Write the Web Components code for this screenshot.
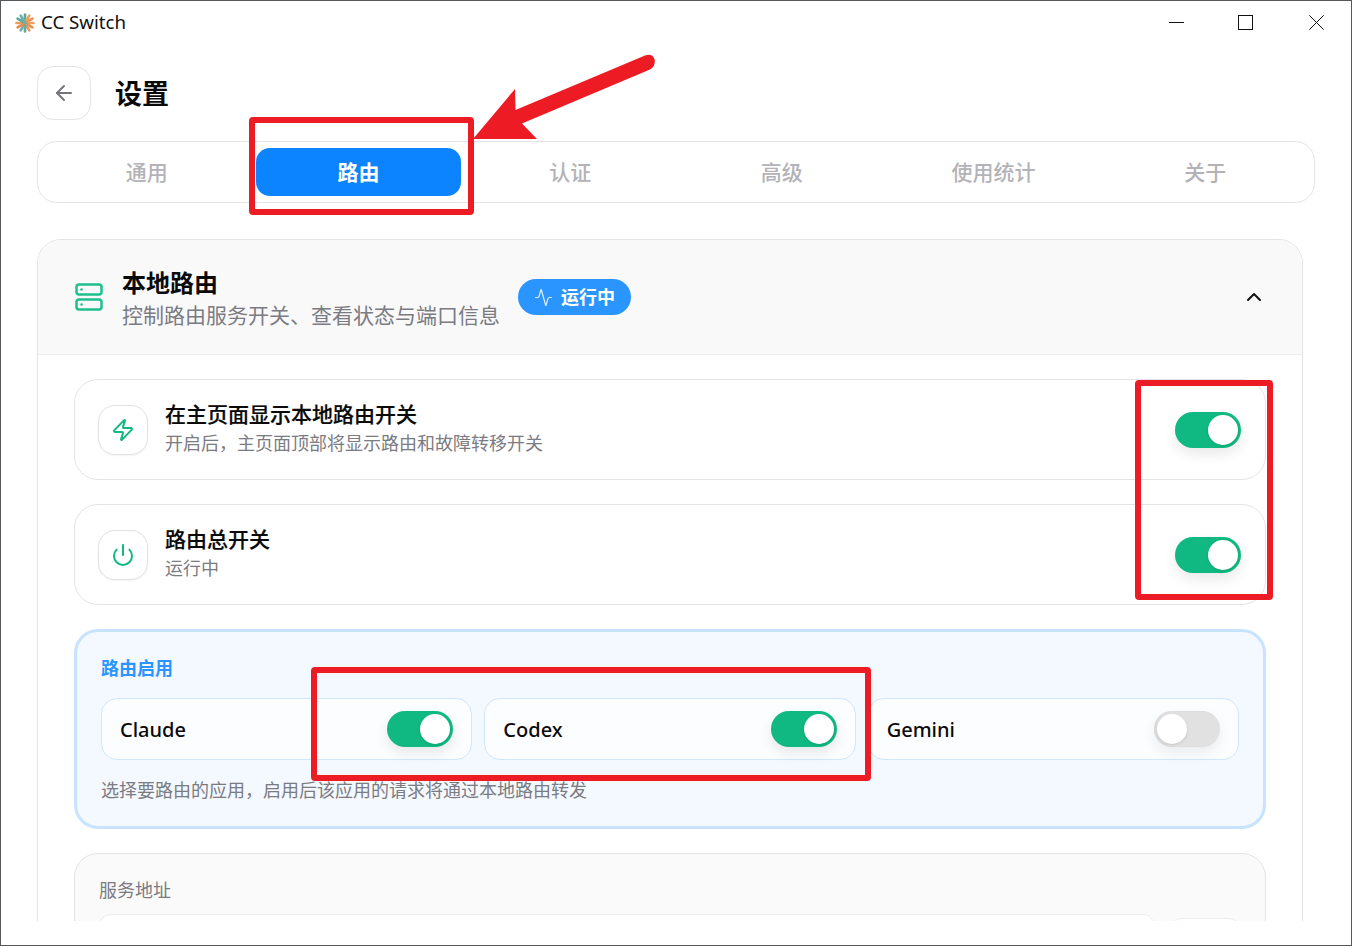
<!DOCTYPE html>
<html lang="zh-CN"><head><meta charset="utf-8"><title>CC Switch</title>
<style>
html,body{margin:0;padding:0;background:#fff}
body{font-family:"Noto Sans","Noto Sans CJK SC",sans-serif;color:#0a0a0a}
</style></head><body>
<cc-window>
  <cc-titlebar slot="bar">CC Switch</cc-titlebar>
  <cc-page-head>设置</cc-page-head>
  <cc-tabs>
    <cc-tab>通用</cc-tab><cc-tab active>路由</cc-tab><cc-tab>认证</cc-tab><cc-tab>高级</cc-tab><cc-tab>使用统计</cc-tab><cc-tab>关于</cc-tab>
  </cc-tabs>
  <cc-card>
    <span slot="title">本地路由</span>
    <span slot="sub">控制路由服务开关、查看状态与端口信息</span>
    <cc-badge slot="badge">运行中</cc-badge>
    <cc-row icon="zap"><span slot="title">在主页面显示本地路由开关</span><span slot="sub">开启后，主页面顶部将显示路由和故障转移开关</span></cc-row>
    <cc-row icon="power"><span slot="title">路由总开关</span><span slot="sub">运行中</span></cc-row>
    <cc-enable-panel>
      <span slot="label">路由启用</span>
      <cc-app-item on>Claude</cc-app-item><cc-app-item on>Codex</cc-app-item><cc-app-item>Gemini</cc-app-item>
      <span slot="help">选择要路由的应用，启用后该应用的请求将通过本地路由转发</span>
    </cc-enable-panel>
    <cc-address>服务地址</cc-address>
  </cc-card>
  <cc-callouts slot="over"></cc-callouts>
</cc-window>
<script>
const ICONS={
 zap:'<path d="M4 14a1 1 0 0 1-.78-1.63l9.9-10.2a.5.5 0 0 1 .86.46l-1.92 6.02A1 1 0 0 0 13 10h7a1 1 0 0 1 .78 1.63l-9.9 10.2a.5.5 0 0 1-.86-.46l1.92-6.02A1 1 0 0 0 11 14z"/>',
 power:'<path d="M12 2v10"/><path d="M18.4 6.6a9 9 0 1 1-12.79 0"/>'
};
function el(name,html,extra){
  customElements.define(name,class extends HTMLElement{
    constructor(){super();const r=this.attachShadow({mode:'open'});r.innerHTML=typeof html==='function'?html(this):html;}
  });
}
el('cc-window',`<style>
:host{display:flex;flex-direction:column;box-sizing:border-box;width:1352px;height:946px;border:1px solid #56595c;position:relative;overflow:hidden;background:#fff}
main{height:876px;overflow:hidden;padding:21px 0 0 36px;box-sizing:border-box;flex:none}
</style><slot name="bar"></slot><main><slot></slot></main><slot name="over"></slot>`);
el('cc-titlebar',`<style>
:host{display:flex;align-items:center;height:44px;flex:none;padding-left:14px;margin-right:-1px;font:18.7px/24px "Noto Sans","Open Sans",sans-serif;color:#111}
svg.logo{width:20px;height:20px;margin-right:6px;flex:none}
.t{flex:1;padding-bottom:2px}
.b{width:70px;height:44px;display:flex;align-items:center;justify-content:center}
.b:nth-of-type(2){margin-right:-1px}
.b:last-child{margin-left:1px}
.b svg{width:16px;height:16px;display:block}
</style>
<svg class="logo" viewBox="0 0 20 20" fill="none" stroke-width="2.7" stroke-linecap="round">
<path d="M10 10V1.500" stroke="#5ea8a2"/><path d="M10 10 14.300 2.600" stroke="#e9a15c"/><path d="M10 10 17.400 5.700" stroke="#ef9150"/><path d="M10 10H18.500" stroke="#f0a25e"/><path d="M10 10 17.400 14.300" stroke="#e98f52"/><path d="M10 10 14.300 17.400" stroke="#ef9a55"/><path d="M10 10V18.500" stroke="#62aaa4"/><path d="M10 10 5.700 17.400" stroke="#6fb0a6"/><path d="M10 10 2.600 14.300" stroke="#e58d55"/><path d="M10 10H1.500" stroke="#ee9a58"/><path d="M10 10 2.600 5.700" stroke="#5ea8a2"/><path d="M10 10 5.700 2.600" stroke="#6bb0a8"/></svg>
<span class="t"><slot></slot></span>
<span class="b"><svg viewBox="0 0 16 16"><path d="M0 7.500h15" stroke="#111" fill="none"/></svg></span>
<span class="b"><svg viewBox="0 0 16 16"><rect x=".5" y=".5" width="14" height="14" fill="none" stroke="#111"/></svg></span>
<span class="b"><svg viewBox="0 0 16 16"><path d="M.3.3l14.400 14.400M14.700.3l-14.400 14.400" fill="none" stroke="#111"/></svg></span>`);
el('cc-page-head',`<style>
:host{display:flex;align-items:center;gap:24px;height:54px;font:700 27px/36px "Noto Sans CJK SC",sans-serif;color:#0a0a0a}
.back{box-sizing:border-box;width:54px;height:54px;border:1px solid #e4e4e7;border-radius:16px;display:flex;align-items:center;justify-content:center;background:#fff}
svg{width:24px;height:24px}
</style><span class="back"><svg viewBox="0 0 24 24" fill="none" stroke="#75767c" stroke-width="2" stroke-linecap="round" stroke-linejoin="round"><path d="m12 19-7-7 7-7"/><path d="M19 12H5"/></svg></span><span><slot></slot></span>`);
el('cc-tabs',`<style>
:host{display:grid;grid-template-columns:repeat(6,1fr);gap:6px;box-sizing:border-box;width:1278px;height:62px;margin-top:21px;padding:6px;border:1px solid #e4e4e7;border-radius:20px;background:#fff}
</style><slot></slot>`);
el('cc-tab',`<style>
:host{display:flex;align-items:center;justify-content:center;box-sizing:border-box;padding-bottom:2px;border-radius:14px;font:500 21px/28px "Noto Sans CJK SC",sans-serif;color:#b3b3b7}
:host([active]){background:#0d84ff;color:#fff;font-weight:700}
</style><slot></slot>`);
el('cc-card',`<style>
:host{display:block;box-sizing:border-box;width:1266px;margin-top:36px;border:1px solid #e4e4e7;border-radius:24px;background:#fff;overflow:hidden}
header{display:flex;align-items:center;height:115px;box-sizing:border-box;padding:0 36px;background:#f9f9f9;border-bottom:1px solid #eeeeef}
.ic{width:30px;height:30px;flex:none;margin-right:18px}
.txt{display:flex;flex-direction:column;margin-right:18px;padding-top:2px}
.h{font:700 24px/32px "Noto Sans CJK SC",sans-serif;color:#0a0a0a;height:32px}
.s{font:400 21px/32px "Noto Sans CJK SC",sans-serif;color:#7b7b82}
.sp{flex:1}
.ch{width:24px;height:24px}
.body{display:flex;flex-direction:column;gap:24px;padding:24px 36px}
</style>
<header>
<svg class="ic" viewBox="0 0 24 24" fill="none" stroke="#1fbf8d" stroke-width="2" stroke-linecap="round" stroke-linejoin="round"><rect x="2" y="2" width="20" height="8" rx="2"/><rect x="2" y="14" width="20" height="8" rx="2"/><path d="M6 6h.01"/><path d="M6 18h.01"/></svg>
<div class="txt"><div class="h"><slot name="title"></slot></div><div class="s"><slot name="sub"></slot></div></div>
<slot name="badge"></slot><span class="sp"></span>
<svg class="ch" viewBox="0 0 24 24" fill="none" stroke="#111" stroke-width="2" stroke-linecap="round" stroke-linejoin="round"><path d="m18 15-6-6-6 6"/></svg>
</header>
<div class="body"><slot></slot></div>`);
el('cc-badge',`<style>
:host{display:inline-flex;align-items:center;gap:8px;box-sizing:border-box;height:36px;padding:0 16px;border-radius:18px;background:#2a95ff;color:#fff;font:700 18px/24px "Noto Sans CJK SC",sans-serif}
svg{width:19px;height:19px;flex:none}
span{padding-bottom:2px}
</style><svg viewBox="0 0 24 24" fill="none" stroke="#fff" stroke-width="1.5" stroke-linecap="round" stroke-linejoin="round" opacity=".85"><path d="M22 12h-2.48a2 2 0 0 0-1.93 1.46l-2.35 8.36a.25.25 0 0 1-.48 0L9.24 2.18a.25.25 0 0 0-.48 0l-2.35 8.36A2 2 0 0 1 4.49 12H2"/></svg><span><slot></slot></span>`);
el('cc-toggle',`<style>
:host{display:flex;align-items:center;justify-content:flex-start;box-sizing:border-box;width:66px;height:36px;padding:3px;border-radius:18px;background:#e1e1e2;flex:none;box-shadow:0 6px 14px rgba(0,0,0,.07), inset 1px 0 2px rgba(0,0,0,.06)}
:host([on]){background:#10b981;justify-content:flex-end;box-shadow:0 6px 14px rgba(0,0,0,.09)}
i{display:block;width:30px;height:30px;border-radius:50%;background:#fff;box-shadow:0 1px 3px rgba(0,0,0,.12)}
</style><i></i>`);
el('cc-row',h=>`<style>
:host{display:flex;align-items:center;box-sizing:border-box;height:101px;padding:0 24px 0 23px;border:1px solid #e4e4e7;border-radius:24px;background:#fff}
.ib{box-sizing:border-box;width:50px;height:50px;margin-right:17px;border:1px solid #e2e2e5;border-radius:17px;display:flex;align-items:center;justify-content:center;flex:none;background:#fff;box-shadow:0 1px 2px rgba(0,0,0,.05)}
.ib svg{width:24px;height:24px}
.t{flex:1;display:flex;flex-direction:column;padding-bottom:5px}
.a{font:500 21px/28px "Noto Sans CJK SC",sans-serif;color:#0a0a0a;-webkit-text-stroke:.2px #0a0a0a}
.b{font:400 18px/26px "Noto Sans CJK SC",sans-serif;color:#7b7b82;margin-top:2px}
</style><span class="ib"><svg viewBox="0 0 24 24" fill="none" stroke="#10b981" stroke-width="2" stroke-linecap="round" stroke-linejoin="round">${ICONS[h.getAttribute('icon')]||''}</svg></span>
<div class="t"><div class="a"><slot name="title"></slot></div><div class="b"><slot name="sub"></slot></div></div><cc-toggle on></cc-toggle>`);
el('cc-enable-panel',`<style>
:host{display:block;box-sizing:border-box;height:200px;padding:22px 24px 24px;border:3px solid #c8e3ff;border-radius:24px;background:#f4f8ff}
.l{font:600 18px/26px "Noto Sans CJK SC",sans-serif;color:#2a95ff}
.g{display:grid;grid-template-columns:repeat(3,1fr);gap:12px;margin:18px 0 16px}
.h{font:400 18px/26px "Noto Sans CJK SC",sans-serif;color:#7b7b82}
</style><div class="l"><slot name="label"></slot></div><div class="g"><slot></slot></div><div class="h"><slot name="help"></slot></div>`);
el('cc-app-item',h=>`<style>
:host{display:flex;align-items:center;justify-content:space-between;box-sizing:border-box;height:62px;padding:0 18px;border:1px solid #cfe6ff;border-radius:16px;background:#fcfdff;font:500 20px/28px "Noto Sans","Noto Sans CJK SC",sans-serif;color:#0a0a0a}
span{padding-top:1px}
</style><span><slot></slot></span><cc-toggle ${h.hasAttribute('on')?'on':''}></cc-toggle>`);
el('cc-address',`<style>
:host{display:block;box-sizing:border-box;height:140px;padding:22px 24px 24px;border:1px solid #e4e4e7;border-radius:24px;background:#fafafa}
.l{font:400 18px/26px "Noto Sans CJK SC",sans-serif;color:#7b7b82}
.r{display:flex;align-items:center;gap:15px;margin-top:12px}
.i{box-sizing:border-box;flex:1;height:56px;border:1px solid #ececee;border-radius:12px;background:#fff}
.b{box-sizing:border-box;width:71px;height:48px;border:1px solid #ececee;border-radius:12px;background:#fff;flex:none}
</style><div class="l"><slot></slot></div><div class="r"><span class="i"></span><span class="b"></span></div>`);
/* red annotations lying over the screenshot */
el('cc-callouts',`<style>
:host{position:absolute;inset:-1px;pointer-events:none;display:block}
svg{position:absolute;left:0;top:0;width:1352px;height:946px}
</style><svg viewBox="0 0 1352 946" fill="none" stroke="#ed1c24" stroke-width="6" stroke-linejoin="round">
<rect x="252" y="120" width="219" height="92" rx="1"/>
<rect x="1138" y="383" width="132" height="214" rx="1"/>
<rect x="314" y="670" width="554" height="108" rx="1"/>
<path d="M473 139 515 89 515.500 110 645 55.500Q652 53 654.500 59 656 66 650 69.500L522 123.500 537 139Z" fill="#ed1c24" stroke="none"/>
</svg>`);
</script>
</body></html>
